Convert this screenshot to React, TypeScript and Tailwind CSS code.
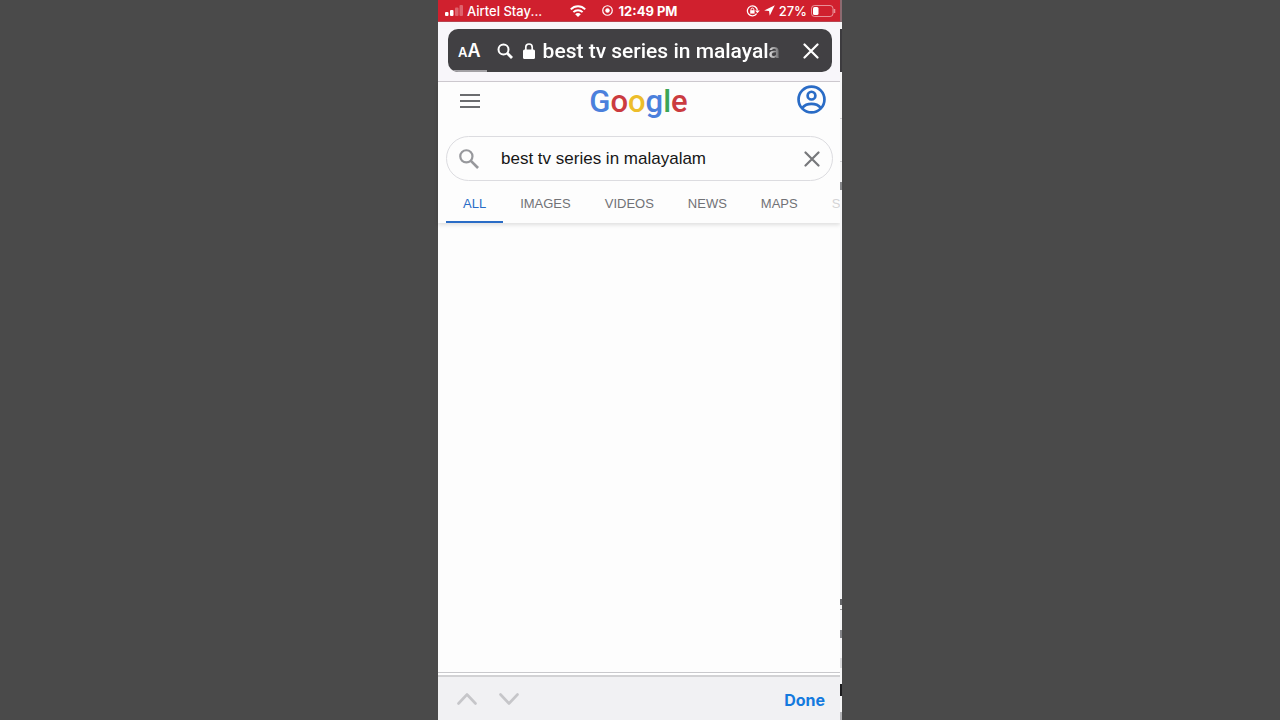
import type { ReactNode } from "react";

const tabs = ["ALL", "IMAGES", "VIDEOS", "NEWS", "MAPS"];

const wordmark = [
  { letter: "G", color: "text-[#4b80dc]" },
  { letter: "o", color: "text-[#cb3b40]" },
  { letter: "o", color: "text-[#edbd2b]" },
  { letter: "g", color: "text-[#4b80dc]" },
  { letter: "l", color: "text-[#3ba556]" },
  { letter: "e", color: "text-[#cb3b40]" },
];

function IconButton({ label, className, children }: { label: string; className?: string; children: ReactNode }) {
  return (
    <button type="button" aria-label={label} className={`flex shrink-0 items-center justify-center ${className ?? ""}`}>
      {children}
    </button>
  );
}

function CloseIcon({ className }: { className: string }) {
  return (
    <svg viewBox="0 0 16 16" className={className} fill="none" stroke="currentColor" strokeWidth="2.2" strokeLinecap="round">
      <path d="M1.5 1.5 14.5 14.5M14.5 1.5 1.5 14.5" />
    </svg>
  );
}

function StatusBar() {
  return (
    <div className="grid h-[22px] grid-cols-[1fr_auto_1fr] items-center border-b border-[#b9424f] bg-[#d0202e] pr-1 pl-[7px] font-['Inter',sans-serif] text-[13px] leading-4 text-white">
      <div className="flex items-center gap-1">
        <svg viewBox="0 0 18 11" className="h-[11px] w-[18px]" fill="currentColor">
          <rect x="0" y="7" width="3.5" height="4" rx="1" />
          <rect x="5" y="5" width="3.5" height="6" rx="1" />
          <rect x="10" y="2.5" width="3.5" height="8.5" rx="1" opacity=".3" />
          <rect x="14.5" y="0" width="3.5" height="11" rx="1" opacity=".3" />
        </svg>
        <span className="font-medium">Airtel Stay...</span>
        <svg viewBox="0 0 16 12" className="mr-4 ml-auto h-3 w-4" fill="none" stroke="currentColor" strokeWidth="2">
          <path d="M.8 4.4C4.8.3 11.2.3 15.2 4.4" />
          <path d="M3.4 7.1c2.6-2.5 6.6-2.5 9.2 0" />
          <path d="M8 12 5.2 9.2c1.6-1.5 4-1.5 5.6 0Z" fill="currentColor" stroke="none" />
        </svg>
      </div>
      <div className="flex items-center gap-1.5 pr-0.5">
        <svg viewBox="0 0 12 12" className="h-[11px] w-[11px]" fill="none" stroke="currentColor" strokeWidth="1.3">
          <circle cx="6" cy="6" r="5.2" />
          <circle cx="6" cy="6" r="2.4" fill="currentColor" stroke="none" />
        </svg>
        <span className="font-bold">12:49 PM</span>
      </div>
      <div className="flex items-center justify-end gap-1">
        <svg viewBox="0 0 14 12" className="h-3 w-[14px]" fill="none" stroke="currentColor" strokeWidth="1.3">
          <path d="M10.6 8.6A5 5 0 1 1 11.4 5.4" />
          <path d="M9 5.4h4.8L11.4 8.2Z" fill="currentColor" stroke="none" />
          <path d="M5 5.4V4.5a1.4 1.4 0 0 1 2.8 0v.9" strokeWidth="1" />
          <rect x="4.2" y="5.2" width="4.4" height="3.4" fill="currentColor" stroke="none" />
        </svg>
        <svg viewBox="0 0 12 12" className="h-[11px] w-[11px]" fill="currentColor">
          <path d="M11.8.2.2 5.9l5.3.6.7 5.3Z" />
        </svg>
        <span className="font-medium">27%</span>
        <svg viewBox="0 0 25 12" className="h-3 w-[25px]" fill="none">
          <rect x=".5" y=".5" width="21.5" height="11" rx="3" stroke="white" opacity=".5" />
          <rect x="2" y="2" width="5.5" height="8" rx="1.5" fill="white" />
          <path d="M23.5 4v4" stroke="white" strokeWidth="1.5" opacity=".5" />
        </svg>
      </div>
    </div>
  );
}

function AddressBar() {
  return (
    <div className="border-b border-[#cfcbd1] bg-[#f8f6fa] pt-[7px] pr-2 pb-[9px] pl-2.5">
      <div className="relative flex h-[43px] items-center overflow-hidden rounded-[10px] bg-[#414043] pr-[13px] pl-2.5 text-white">
        <button type="button" aria-label="Page settings" className="flex items-baseline pt-0.5 font-['Inter',sans-serif] font-semibold">
          <span className="text-[13px] leading-5">A</span>
          <span className="text-[18px] leading-5">A</span>
        </button>
        <svg viewBox="0 0 16 16" className="ml-4 h-4 w-4 shrink-0" fill="none" stroke="currentColor" strokeWidth="2">
          <circle cx="6.5" cy="6.5" r="5" />
          <path d="m10.3 10.3 4.7 4.7" strokeWidth="2.8" />
        </svg>
        <svg viewBox="0 0 12 16" className="ml-2.5 h-4 w-3 shrink-0" fill="currentColor">
          <rect x="0" y="6.5" width="12" height="9.5" rx="1.5" />
          <path d="M2.8 7.5V4.2a3.2 3.2 0 0 1 6.4 0v3.3" fill="none" stroke="currentColor" strokeWidth="1.7" />
        </svg>
        <span className="ml-2 min-w-0 flex-1 overflow-hidden whitespace-nowrap mask-r-from-93% font-['Roboto',sans-serif] text-[21px] leading-6 font-medium">
          best tv series in malayala
        </span>
        <IconButton label="Stop loading" className="ml-5">
          <CloseIcon className="h-4 w-4" />
        </IconButton>
        <div className="absolute bottom-0 left-0 h-0.5 w-[39px] bg-[#a3a1a5]" />
      </div>
    </div>
  );
}

function SearchHeader() {
  return (
    <header className="bg-[#fdfdfd] pl-2 shadow-[0_2px_4px_rgba(0,0,0,0.12)]">
      <div className="flex h-[38px] items-center justify-between px-3.5">
        <IconButton label="Menu">
          <svg viewBox="0 0 20 14" className="h-[14px] w-5 text-[#6b6c6f]" stroke="currentColor" strokeWidth="2">
            <path d="M0 1h20M0 7h20M0 13h20" />
          </svg>
        </IconButton>
        <a href="#home" aria-label="Google" className="pt-0.5 font-['Roboto',sans-serif] text-[31px] leading-9 font-medium">
          {wordmark.map((item, i) => (
            <span key={i} className={item.color}>{item.letter}</span>
          ))}
        </a>
        <IconButton label="Account">
          <svg viewBox="0 0 30 30" className="mb-1 h-[29px] w-[29px] text-[#2a6cc6]" fill="none" stroke="currentColor" strokeWidth="2.8">
            <circle cx="15" cy="15" r="13.4" />
            <circle cx="15" cy="11" r="4" />
            <path d="M5.5 23.6c4.5-5.4 14.5-5.4 19 0" />
          </svg>
        </IconButton>
      </div>
      <form className="mt-4 mr-[7px] flex h-[45px] items-center rounded-full border border-[#dcdce0] px-3">
        <IconButton label="Search">
          <svg viewBox="0 0 19 19" className="h-5 w-5 text-[#97989c]" fill="none" stroke="currentColor" strokeWidth="2.1">
            <circle cx="7" cy="7" r="5.8" />
            <path d="m11.3 11.3 6.8 6.8" strokeWidth="2.5" />
          </svg>
        </IconButton>
        <input
          type="text"
          aria-label="Search query"
          defaultValue="best tv series in malayalam"
          className="ml-[22px] min-w-0 flex-1 bg-transparent text-[17px] leading-5 text-[#161616] outline-none"
        />
        <IconButton label="Clear search">
          <CloseIcon className="h-4 w-4 text-[#77787b]" />
        </IconButton>
      </form>
      <nav className="flex h-[42px] overflow-hidden whitespace-nowrap text-[13px] leading-4 text-[#717276]">
        {tabs.map((tab, i) => (
          <a
            key={tab}
            href={`#${tab.toLowerCase()}`}
            className={`flex h-[42px] shrink-0 items-center border-b-2 px-[17px] pt-1.5 ${i === 0 ? "border-[#2a6cc6] text-[#2a6cc6]" : "border-transparent"}`}
          >
            {tab}
          </a>
        ))}
        <a href="#shopping" className="flex h-[42px] items-center border-b-2 border-transparent pt-1.5 pl-[17px] text-[#d4d4d6]">
          S
        </a>
      </nav>
    </header>
  );
}

function KeyboardBar() {
  return (
    <div className="flex h-[48px] flex-col border-t border-[#c9c9cc] bg-white pt-0.5">
      <div className="flex flex-1 items-center border-t-2 border-[#d2d2d4] bg-[#f1f1f3] pr-[15px] pl-[19px] text-[#c6c6c9]">
        <IconButton label="Previous field">
          <svg viewBox="0 0 20 12" className="h-3 w-5" fill="none" stroke="currentColor" strokeWidth="2.6" strokeLinecap="round" strokeLinejoin="round">
            <path d="m1.5 10.5 8.5-9 8.5 9" />
          </svg>
        </IconButton>
        <IconButton label="Next field" className="ml-[22px]">
          <svg viewBox="0 0 20 12" className="h-3 w-5" fill="none" stroke="currentColor" strokeWidth="2.6" strokeLinecap="round" strokeLinejoin="round">
            <path d="m1.5 1.5 8.5 9 8.5-9" />
          </svg>
        </IconButton>
        <button type="button" className="ml-auto pt-0.5 font-['Inter',sans-serif] text-[16px] leading-5 font-bold text-[#147ade]">
          Done
        </button>
      </div>
    </div>
  );
}

// Edge of the page that is sliding away behind the current one.
function PreviousPageEdge() {
  return (
    <div aria-hidden="true" className="flex w-0.5 shrink-0 flex-col bg-[#f6f6f7]">
      <div className="h-[22px] bg-[#8d6a70]" />
      <div className="mt-[7px] h-[43px] bg-[#3c3b3e]" />
      <div className="mt-[46px] h-px bg-[#cfcfd2]" />
      <div className="mt-[42px] h-px bg-[#cfcfd2]" />
      <div className="mt-5 h-2 bg-[#88898c]" />
      <div className="mt-auto mb-1 h-1.5 bg-[#66676a]" />
      <div className="mb-5 h-px bg-[#9a9a9d]" />
      <div className="mb-5 h-2 bg-[#85868a]" />
      <div className="mb-4 h-2.5 bg-[#dcdcde]" />
      <div className="mb-4 h-3 bg-[#1d1d1f]" />
      <div className="h-2 bg-[#b5b5b8]" />
    </div>
  );
}

export default function App() {
  return (
    <div className="min-h-screen bg-[#4a4a4a] font-['Liberation_Sans',Arial,sans-serif]">
      <div className="mx-auto flex min-h-screen max-w-[404px] bg-[#fdfdfd]">
        <main className="flex min-w-0 flex-1 flex-col">
          <StatusBar />
          <AddressBar />
          <SearchHeader />
          <div className="flex-1" />
          <KeyboardBar />
        </main>
        <PreviousPageEdge />
      </div>
    </div>
  );
}
